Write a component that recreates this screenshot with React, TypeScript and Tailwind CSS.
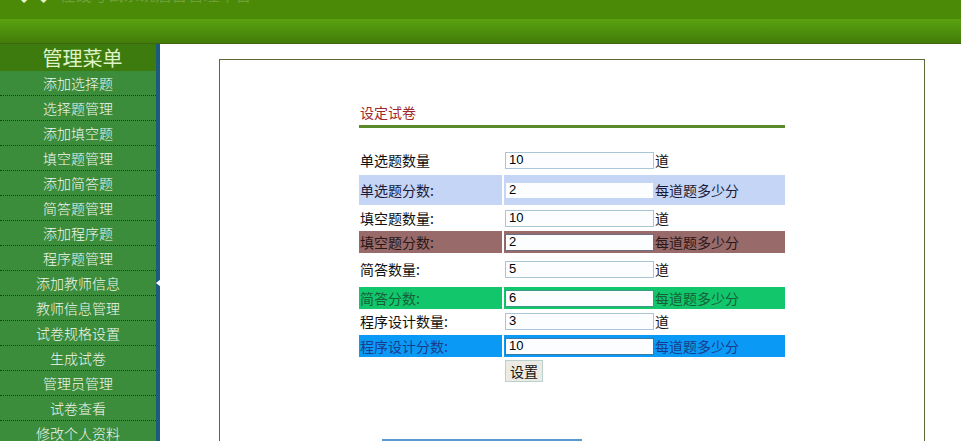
import React from 'react'

const menu = [
  '添加选择题',
  '选择题管理',
  '添加填空题',
  '填空题管理',
  '添加简答题',
  '简答题管理',
  '添加程序题',
  '程序题管理',
  '添加教师信息',
  '教师信息管理',
  '试卷规格设置',
  '生成试卷',
  '管理员管理',
  '试卷查看',
  '修改个人资料',
]

type Row = {
  label: string
  value: string
  unit: string
  box: string
  bg: string
  text: string
  input: string
}

const rows: Row[] = [
  { label: '单选题数量', value: '10', unit: '道', box: 'mt-[22px] h-[20px]', bg: '', text: 'text-[#111]', input: 'border-[#a9c6d6]' },
  { label: '单选题分数:', value: '2', unit: '每道题多少分', box: 'mt-[5px] h-[30px]', bg: 'bg-[#c5d5f5]', text: 'text-[#1a1a3a]', input: 'border-[#c5d5f5]' },
  { label: '填空题数量:', value: '10', unit: '道', box: 'mt-[3px] h-[20px]', bg: '', text: 'text-[#111]', input: 'border-[#a9c6d6]' },
  { label: '填空题分数:', value: '2', unit: '每道题多少分', box: 'mt-[3px] h-[22px]', bg: 'bg-[#986a6a]', text: 'text-[#2a1818]', input: 'border-[#6e6e80]' },
  { label: '简答数量:', value: '5', unit: '道', box: 'mt-[5px] h-[22px]', bg: '', text: 'text-[#111]', input: 'border-[#a9c6d6]' },
  { label: '简答分数:', value: '6', unit: '每道题多少分', box: 'mt-[7px] h-[22px]', bg: 'bg-[#12c76b]', text: 'text-[#15603a]', input: 'border-[#3a9a88]' },
  { label: '程序设计数量:', value: '3', unit: '道', box: 'mt-[2px] h-[20px]', bg: '', text: 'text-[#111]', input: 'border-[#a9c6d6]' },
  { label: '程序设计分数:', value: '10', unit: '每道题多少分', box: 'mt-[4px] h-[22px]', bg: 'bg-[#0a9af6]', text: 'text-[#1a3c8c]', input: 'border-[#3a7aa8]' },
]

export default function App() {
  return (
    <div className="w-[961px] h-[441px] overflow-hidden bg-white font-['Noto_Sans_CJK_SC','Noto_Sans',sans-serif]">
      {/* top banner */}
      <header>
        <div className="h-[19px] bg-[#4b8a07] overflow-hidden pl-[16px]">
          <div className="-mt-[15px] flex items-end gap-[8px] text-[16px] leading-[18px]">
            <span className="text-[#e8f5d0]">◆ ◆</span>
            <span className="text-[#6f9f3a]">在线考试系统后台管理平台</span>
          </div>
        </div>
        <div className="h-[24px] bg-gradient-to-b from-[#5aa211] to-[#437c09]" />
        <div className="h-[1px] bg-[#3b6612]" />
      </header>

      <div className="flex">
        {/* sidebar */}
        <aside className="w-[160px] h-[397px] bg-[#3b8c3b] border-r-[4px] border-[#1b5c7c]">
          <div className="h-[27px] bg-[#3e7b0e] text-[#dff3c8] text-[20px] leading-[27px] text-center pl-[9px]">
            管理菜单
          </div>
          {menu.map((item) => (
            <div
              key={item}
              className="relative h-[25px] border-b border-dotted border-[#173f17] text-[#f2f7ee] text-[14px] leading-[24px] text-center font-light"
            >
              {item}
              {item === '添加教师信息' && (
                <span className="absolute right-[-5px] top-[8px] w-0 h-0 border-y-[4px] border-y-transparent border-r-[5px] border-r-white" />
              )}
            </div>
          ))}
        </aside>

        {/* main */}
        <main className="flex-1 pl-[59px] pt-[15px]">
          <div className="w-[706px] h-[420px] border border-[#5c6a3a] pt-[42px]">
            <div className="w-[426px] mx-auto">
              <div className="h-[20px] leading-[20px] text-[14px] text-[#a0282a] pl-[1px]">设定试卷</div>
              <div className="mt-[3px] h-[3px] bg-[#5b8a2a]" />

              {rows.map((r) => (
                <div key={r.label} className={`flex ${r.box}`}>
                  <div className={`w-[143px] flex items-center pl-[1px] text-[14px] ${r.bg} ${r.text}`}>
                    {r.label}
                  </div>
                  <div className="w-[2px]" />
                  <div className={`flex-1 flex items-center text-[14px] ${r.bg} ${r.text}`}>
                    <input
                      readOnly
                      value={r.value}
                      className={`ml-[1px] w-[149px] h-[17px] border bg-[#fbfdff] pl-[3px] text-[13px] text-black font-['Liberation_Sans',sans-serif] outline-none ${r.input}`}
                    />
                    <span className="ml-[1px]">{r.unit}</span>
                  </div>
                </div>
              ))}

              <div className="flex mt-[3px] h-[22px]">
                <div className="w-[146px]" />
                <button className="w-[38px] h-[22px] border border-[#bcd0d0] bg-[#ebebe3] text-[14px] leading-[20px] text-[#111]">
                  设置
                </button>
              </div>

              <div className="ml-[23px] mt-[57px] w-[200px] h-[2px] bg-[#5a9ad2]" />
            </div>
          </div>
        </main>
      </div>
    </div>
  )
}
